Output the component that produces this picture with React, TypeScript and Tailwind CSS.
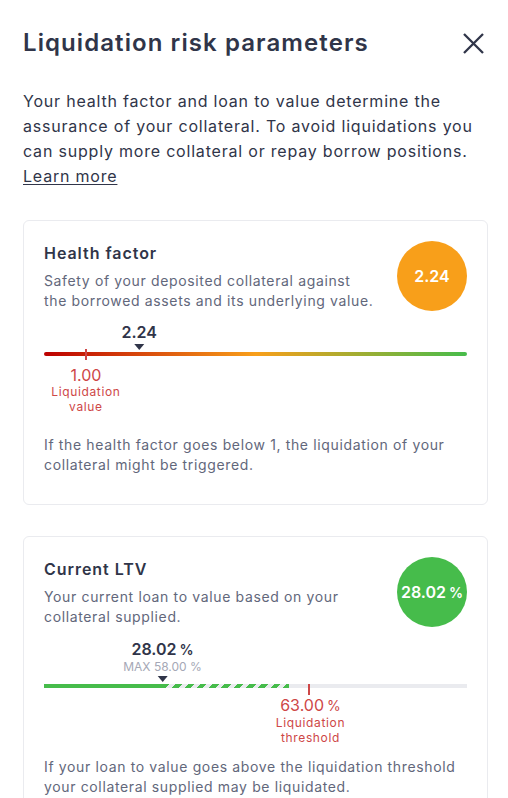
const Marker = ({ left, children }: { left: number; children: React.ReactNode }) => (
  <div
    className="absolute bottom-[2px] flex -translate-x-1/2 flex-col items-center"
    style={{ left: `${left}%` }}
  >
    {children}
    <div className="mt-[2px] h-0 w-0 border-x-[5px] border-t-[6px] border-x-transparent border-t-[#303549]" />
  </div>
);

const Pct = ({ value }: { value: string }) => (
  <span className="whitespace-nowrap">
    {value}
    <span className="ml-[3px] text-[14px]">%</span>
  </span>
);

const Card = ({
  title,
  text,
  badge,
  badgeColor,
  children,
  footer,
}: {
  title: string;
  text: string;
  badge: React.ReactNode;
  badgeColor: string;
  children: React.ReactNode;
  footer: string;
}) => (
  <div className="rounded-md border border-[#EAEBEF] bg-white px-5 pt-5 pb-[29px]">
    <div className="flex items-start justify-between">
      <div className="w-[334px]">
        <h3 className="text-base leading-6 font-semibold tracking-[0.06em] text-[#303549]">{title}</h3>
        <p className="mt-[6px] text-sm leading-5 text-[#62677B]">{text}</p>
      </div>
      <div
        className={`flex h-[70px] w-[70px] shrink-0 items-center justify-center rounded-full text-base font-semibold tracking-normal text-white ${badgeColor}`}
      >
        {badge}
      </div>
    </div>
    {children}
    <p className="text-sm leading-5 text-[#62677B]">{footer}</p>
  </div>
);

export default function App() {
  return (
    <div
      className="min-h-screen w-[508px] bg-white pt-[27px] pr-[20px] pl-[23px] tracking-[0.04em] text-[#303549]"
      style={{ fontFamily: "Inter, 'Noto Sans', sans-serif" }}
    >
      <div className="flex items-center justify-between">
        <h2 className="text-2xl leading-8 font-semibold tracking-[0.045em]">Liquidation risk parameters</h2>
        <svg width="21" height="21" viewBox="0 0 21 21" className="mr-[4px]" fill="none">
          <path d="M1 1L20 20M20 1L1 20" stroke="#303549" strokeWidth="2.3" />
        </svg>
      </div>

      <p className="mt-[30px] text-base leading-[25px] tracking-[0.05em]">
        Your health factor and loan to value determine the assurance of your collateral. To avoid
        liquidations you can supply more collateral or repay borrow positions.{" "}
        <a href="#" className="underline underline-offset-2">
          Learn more
        </a>
      </p>

      <div className="mt-[31px] flex flex-col gap-[31px]">
        <Card
          title="Health factor"
          text="Safety of your deposited collateral against the borrowed assets and its underlying value."
          badge="2.24"
          badgeColor="bg-[#F89F1A]"
          footer="If the health factor goes below 1, the liquidation of your collateral might be triggered."
        >
          <div className="relative mt-[11px] h-[30px]">
            <Marker left={22.5}>
              <span className="text-base leading-5 font-semibold tracking-normal text-[#303549]">2.24</span>
            </Marker>
          </div>
          <div className="relative h-[4px] rounded-sm bg-[linear-gradient(90deg,#BC0000_0%,#F89F1A_50%,#46BC4B_100%)]">
            <div className="absolute top-[-3px] left-[9.7%] h-[11px] w-[2px] bg-[#CE4747]" />
          </div>
          <div className="relative h-[79px]">
            <div className="absolute top-[10px] left-[9.9%] flex -translate-x-1/2 flex-col items-center text-center text-[#CE4747]">
              <span className="text-base leading-[18px] tracking-normal">1.00</span>
              <span className="text-xs leading-[15px]">
                Liquidation
                <br />
                value
              </span>
            </div>
          </div>
        </Card>

        <Card
          title="Current LTV"
          text="Your current loan to value based on your collateral supplied."
          badge={<Pct value="28.02" />}
          badgeColor="bg-[#46BC4B]"
          footer="If your loan to value goes above the liquidation threshold your collateral supplied may be liquidated."
        >
          <div className="relative mt-[12px] h-[45px]">
            <Marker left={28.02}>
              <span className="text-base leading-5 font-semibold tracking-normal text-[#303549]">
                <Pct value="28.02" />
              </span>
              <span className="text-xs leading-[14px] tracking-normal whitespace-nowrap text-[#A5A8B6]">
                MAX 58.00 %
              </span>
            </Marker>
          </div>
          <div className="relative h-[4px] bg-[#EAEBEF]">
            <div className="absolute top-0 left-0 h-full w-[28.02%] bg-[#46BC4B]" />
            <div className="absolute top-0 left-[28.02%] h-full w-[29.98%] bg-[repeating-linear-gradient(-45deg,#46BC4B_0px,#46BC4B_4.6px,transparent_4.6px,transparent_8.7px)]" />
            <div className="absolute top-0 left-[62.5%] h-[11px] w-[2px] bg-[#CE4747]" />
          </div>
          <div className="relative h-[69px]">
            <div className="absolute top-[8px] left-[63%] flex -translate-x-1/2 flex-col items-center text-center text-[#CE4747]">
              <span className="text-base leading-[18px] tracking-normal">
                <Pct value="63.00" />
              </span>
              <span className="text-xs leading-[15px]">
                Liquidation
                <br />
                threshold
              </span>
            </div>
          </div>
        </Card>
      </div>
    </div>
  );
}
